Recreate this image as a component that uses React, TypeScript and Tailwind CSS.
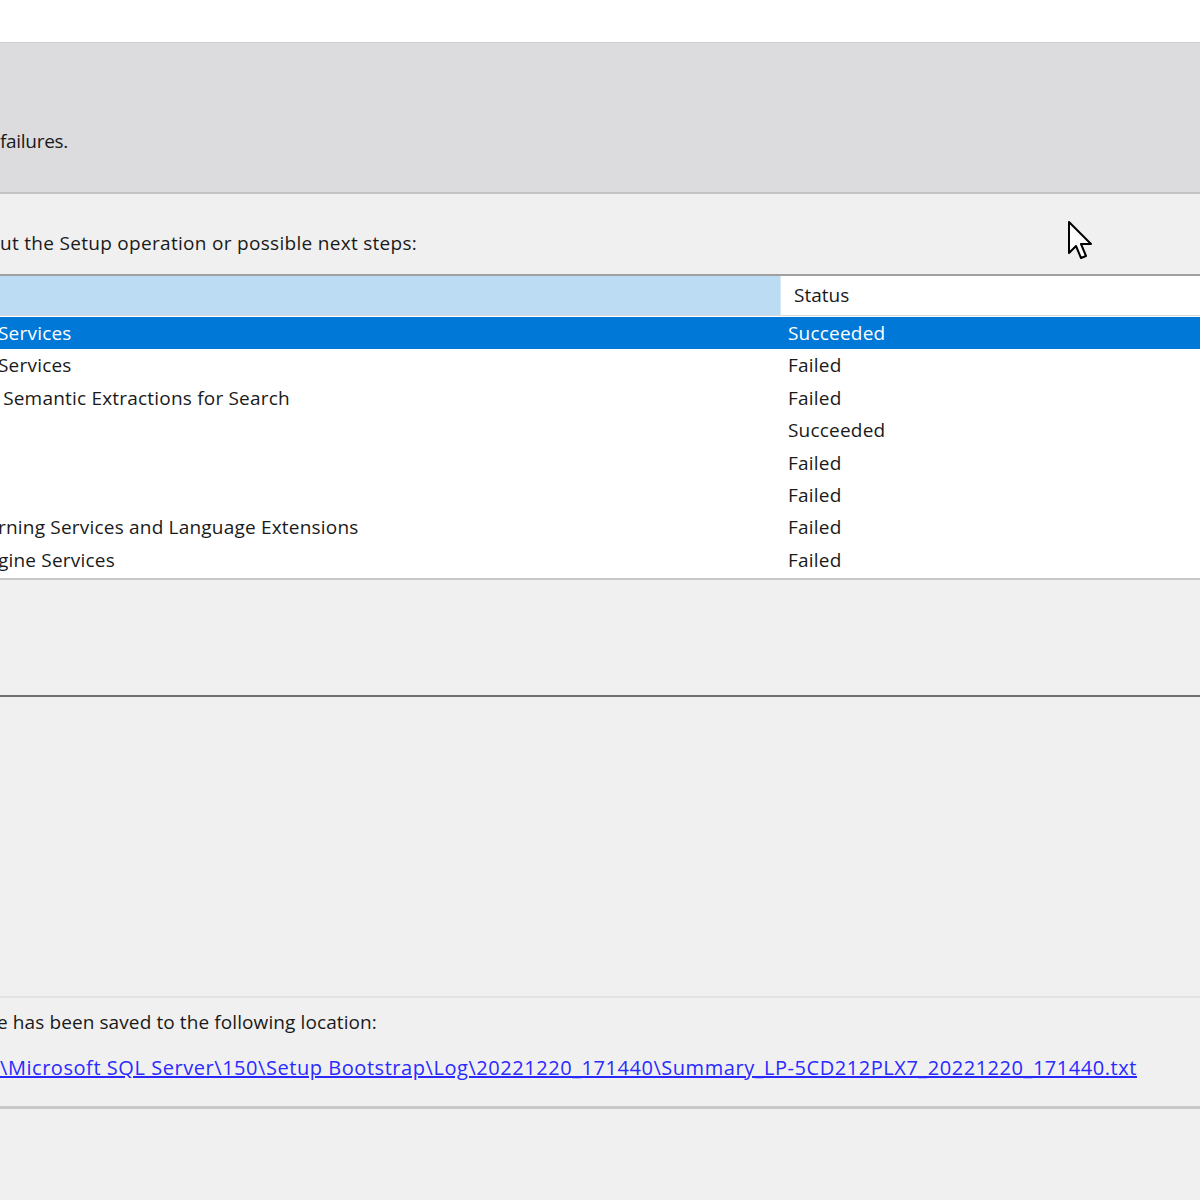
const rows = [
  { name: "Services", status: "Succeeded", sel: true },
  { name: "Services", status: "Failed" },
  { name: " Semantic Extractions for Search", status: "Failed" },
  { name: "", status: "Succeeded" },
  { name: "", status: "Failed" },
  { name: "", status: "Failed" },
  { name: "rning Services and Language Extensions", status: "Failed" },
  { name: "gine Services", status: "Failed" },
]

export default function App() {
  return (
    <div className="relative w-[1200px] h-[1200px] overflow-hidden bg-[#f0f0f0] text-[19px] text-[#1a1a1a]" style={{ fontFamily: '"Open Sans", "Noto Sans", sans-serif' }}>
      <div className="h-[42px] bg-white" />
      <div className="h-[152px] bg-[#dcdcdf] border-t border-[#cfcfd2] border-b-2 border-b-[#c4c4c6] flex items-end pb-[37px]">
        <span className="tracking-[-0.3px]">failures.</span>
      </div>
      <div className="h-[80px] flex items-center pt-[18px] tracking-[0.3px]">
        ut the Setup operation or possible next steps:
      </div>
      <div className="border-t-2 border-[#a0a0a0] border-b-2 border-b-[#c8c8c8] bg-white">
        <div className="flex h-[40px] border-b border-[#d8d8d8]">
          <div className="w-[781px] bg-[#bcdcf4] border-r border-[#d8e8f4]" />
          <div className="flex-1 flex items-center pl-[13px]">Status</div>
        </div>
        <div className="pt-[1px] pb-[2px] tracking-[0.2px]">
          {rows.map((r, i) => (
            <div key={i} className={"flex h-[32.4px] items-center " + (r.sel ? "bg-[#0078d7] text-white" : "")}>
              <div className="w-[790px] -ml-[2px] whitespace-pre">{r.name}</div>
              <div>{r.status}</div>
            </div>
          ))}
        </div>
      </div>
      <div className="h-[117px] border-b-2 border-[#6e6e6e]" />
      <div className="h-[301px] border-b-2 border-[#e2e2e2]" />
      <div className="h-[111px] border-b-[3px] border-[#c8c8c8] pt-[10px]">
        <div className="-ml-[3px] tracking-[0.1px]">e has been saved to the following location:</div>
        <div className="mt-[16px] text-[20px] text-[#2a2aff] underline tracking-[0.55px] whitespace-nowrap">
          \Microsoft SQL Server\150\Setup Bootstrap\Log\20221220_171440\Summary_LP-5CD212PLX7_20221220_171440.txt
        </div>
      </div>
      <svg className="absolute left-[1068px] top-[221px]" width="26" height="40" viewBox="0 0 13 20">
        <path d="M0.5 0.5 L0.5 16 L4 12.5 L6.5 18.5 L9 17.5 L6.5 11.5 L11.5 11.5 Z" fill="white" stroke="black" strokeWidth="1" strokeLinejoin="round" />
      </svg>
    </div>
  )
}
